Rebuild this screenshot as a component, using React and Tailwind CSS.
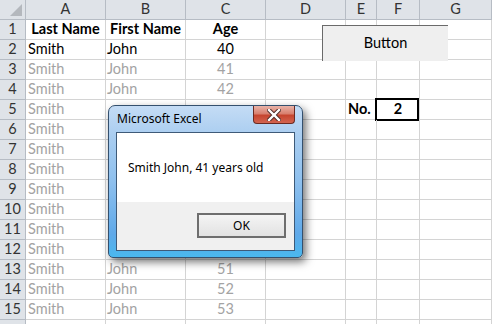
import React from "react";

const cols = ["A", "B", "C", "D", "E", "F", "G"];

function Cell({ children, className = "" }) {
  return (
    <div className={"h-[20px] border-r border-b border-[#d4d4d4] flex items-center overflow-visible whitespace-nowrap relative " + className}>
      {children}
    </div>
  );
}

export default function App() {
  const rows = [];
  for (let r = 1; r <= 16; r++) rows.push(r);

  const rowCells = (r) => {
    let a = null, b = null, c = null, e = null, f = null;
    const color = r === 2 ? "text-black" : "text-[#a3a3a3]";
    const hidden = r >= 5 && r <= 12;
    if (r === 1) {
      a = <span className="w-full text-center font-bold text-black">Last Name</span>;
      b = <span className="w-full text-center font-bold text-black">First Name</span>;
      c = <span className="w-full text-center font-bold text-black">Age</span>;
    } else if (r <= 15) {
      a = <span className={"pl-[2px] " + color}>Smith</span>;
      if (!hidden) {
        b = <span className={"pl-[1px] " + color}>John</span>;
        c = <span className={"w-full text-center " + color}>{38 + r}</span>;
      }
    }
    if (r === 5) {
      e = <span className="pl-[2px] font-bold text-black">No.</span>;
      f = (
        <>
          <div className="absolute left-[-2px] top-[-2px] w-[44px] h-[23px] border-2 border-black"></div>
          <span className="w-full text-center font-bold text-black">2</span>
        </>
      );
    }
    return [a, b, c, null, e, f, null];
  };

  return (
    <div className="w-[492px] h-[324px] overflow-hidden relative bg-white font-['Lato',sans-serif] text-[14.5px] leading-none">
      <div className="grid grid-cols-[26px_80px_80px_80px_80px_31px_43px_1fr]">
        <div className="h-[20px] bg-[#dfe3e8] border-r border-b border-[#b6bcc4] relative">
          <div className="absolute right-[3px] bottom-[3px] w-0 h-0 border-l-[12px] border-l-transparent border-b-[12px] border-b-[#b4b8bd]"></div>
        </div>
        {cols.map((c) => (
          <div key={c} className="h-[20px] bg-[#dfe3e8] border-r border-b border-[#b6bcc4] flex items-center justify-center text-[#333]">
            {c}
          </div>
        ))}
        {rows.map((r) => (
          <React.Fragment key={r}>
            <div className="h-[20px] bg-[#dfe3e8] border-r border-b border-[#b6bcc4] flex items-center justify-center text-[#333]">
              {r <= 15 ? r : null}
            </div>
            {rowCells(r).map((content, i) => (
              <Cell key={i}>{content}</Cell>
            ))}
          </React.Fragment>
        ))}
      </div>

      {/* Form button */}
      <div className="absolute left-[322px] top-[25px] w-[126px] h-[36px] bg-[#efefef] border-t border-l border-[#6a6a6a] flex items-center justify-center text-black">
        Button
      </div>

      {/* Message box */}
      <div className="absolute left-[108px] top-[105px] w-[195px] h-[153px] rounded-t-[7px] rounded-b-[5px] border border-[#34506e] bg-[linear-gradient(180deg,#c4dcf5_0%,#a9cdf0_20%,#8ec0ee_50%,#5fa9e9_85%,#4ab8ee_100%)] shadow-[3px_4px_8px_rgba(0,0,0,0.55)] flex flex-col px-[7px] pb-[6px] font-['Noto_Sans',sans-serif] text-[12px]">
        <div className="h-[26px] flex items-center text-black pl-[1px]">Microsoft Excel</div>
        <div className="flex-1 border border-[#3e5a78] flex flex-col">
          <div className="h-[69px] bg-white flex items-center pl-[11px] text-black">
            Smith John, 41 years old
          </div>
          <div className="flex-1 bg-[#f0f0f0] pt-[11px] pl-[80px]">
            <div className="w-[89px] h-[25px] border-2 border-[#6e6e6e] bg-[linear-gradient(180deg,#f4f4f4,#e2e2e2)] flex items-center justify-center text-black">
              OK
            </div>
          </div>
        </div>
        <div className="absolute left-[144px] top-[0px] w-[42px] h-[18px] rounded-b-[4px] border border-t-0 border-[#6a2a22] bg-[linear-gradient(180deg,#e9b3a8_0%,#d8806f_45%,#c6452f_55%,#d26450_100%)] flex items-center justify-center">
          <svg width="14" height="12" viewBox="0 0 14 12">
            <path d="M2 1 L7 6 L12 1 M2 11 L7 6 L12 11" stroke="#4a2a26" strokeWidth="4.2" fill="none" strokeLinecap="square" />
            <path d="M2 1 L7 6 L12 1 M2 11 L7 6 L12 11" stroke="#ffffff" strokeWidth="2.4" fill="none" strokeLinecap="square" />
          </svg>
        </div>
      </div>
    </div>
  );
}
